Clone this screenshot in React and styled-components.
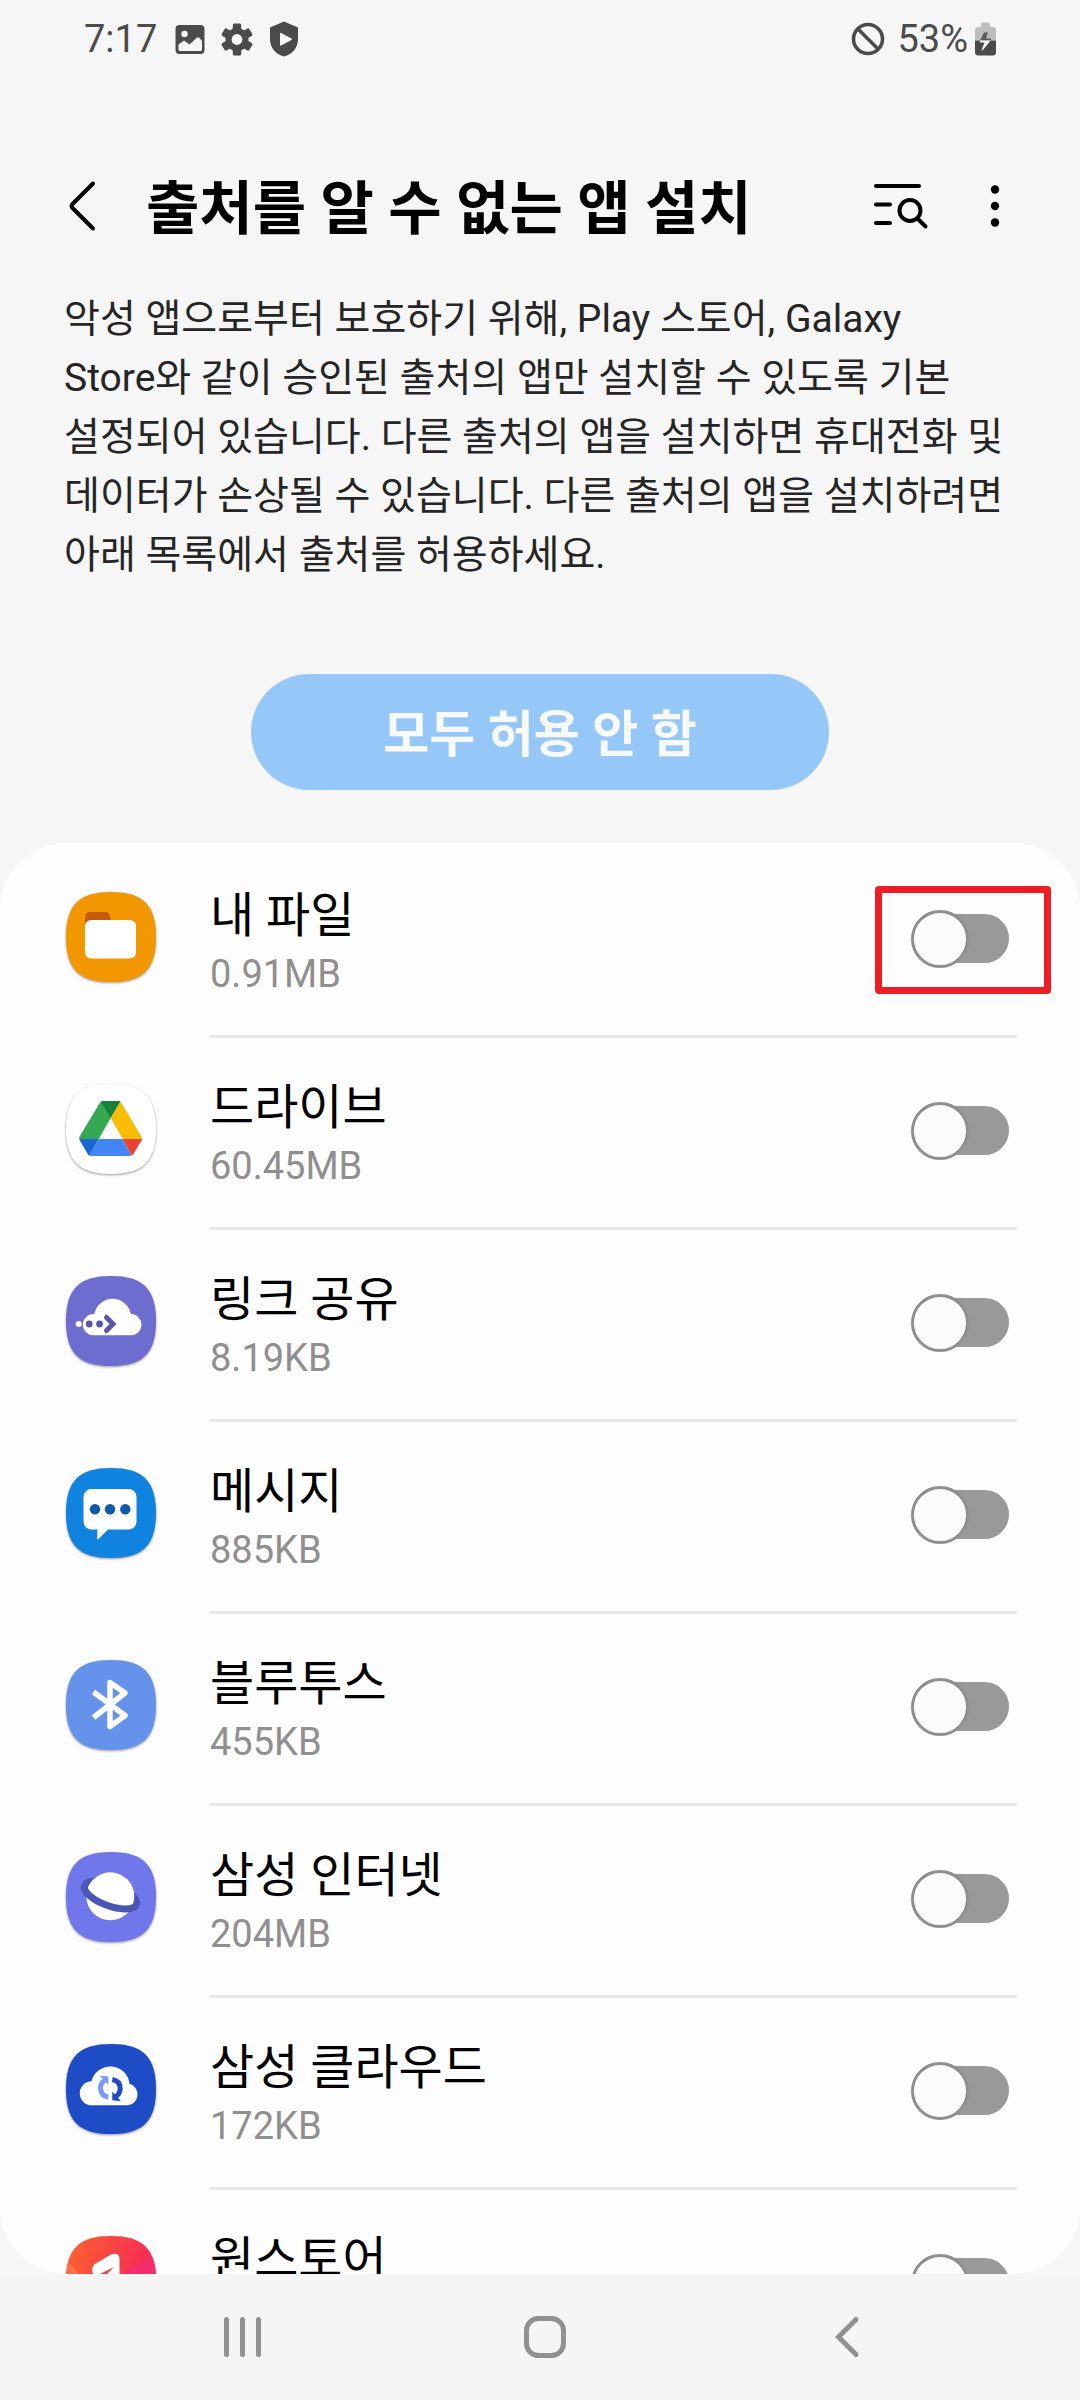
import React, { useState } from 'react';
import styled, { createGlobalStyle } from 'styled-components';

const APPS = [
  { id: 'files', name: '내 파일', size: '0.91MB', marked: true },
  { id: 'drive', name: '드라이브', size: '60.45MB' },
  { id: 'link', name: '링크 공유', size: '8.19KB' },
  { id: 'messages', name: '메시지', size: '885KB' },
  { id: 'bluetooth', name: '블루투스', size: '455KB' },
  { id: 'internet', name: '삼성 인터넷', size: '204MB' },
  { id: 'cloud', name: '삼성 클라우드', size: '172KB' },
  { id: 'onestore', name: '원스토어', size: '' },
];

const SQUIRCLE =
  'M45 0C77 0 90 13 90 45S77 90 45 90S0 77 0 45S13 0 45 0Z';

//--------------------------앱 아이콘--------------------------------

const AppArt = {
  files: (
    <>
      <path d={SQUIRCLE} fill="#f39700" />
      <path d="M19 36V25a5 5 0 0 1 5-5h16c3 0 4 3 5 9v7z" fill="#c55a08" />
      <rect x="19" y="28" width="51" height="38.5" rx="6" fill="#fff" />
    </>
  ),
  drive: (
    <>
      <path d={SQUIRCLE} fill="#fff" />
      <path
        d="M36.5 17H54L44.7 34L32.7 55H13.3V53L34 18.5Q35 17 36.5 17Z"
        fill="#34a853"
      />
      <path d="M36.5 17H52.5L54.5 17.5L44.7 34L35 17.5Z" fill="#188038" />
      <path d="M54.5 17.5L76 53.5V55H56.7L44.7 34Z" fill="#fbbc04" />
      <path d="M13.3 55H32.7L23.3 71.5L22 70.5L13.8 56.5Z" fill="#1967d2" />
      <path d="M32.7 55H56.7L65.5 71.5L63.5 72H25L23 71.5Z" fill="#4285f4" />
      <path d="M56.7 55H76L75.6 56.5L67 70.5L65.5 71.5Z" fill="#ea4335" />
    </>
  ),
  link: (
    <>
      <path d={SQUIRCLE} fill="#6d6dcf" />
      <path
        d="M27.5 59.3a10.6 10.6 0 0 1 0-21.2h.8a18.6 18.6 0 0 1 36.6 0a10.6 10.6 0 0 1 0 21.2z"
        fill="#fff"
      />
      <circle cx="12.7" cy="48" r="3" fill="#fff" />
      <circle cx="23.2" cy="48" r="3.4" fill="#5a55a8" />
      <circle cx="33.6" cy="48" r="3.4" fill="#5a55a8" />
      <path
        d="M40.5 41.5L47 48L40.5 54.5"
        stroke="#5a55a8"
        strokeWidth="5"
        strokeLinecap="round"
        fill="none"
      />
    </>
  ),
  messages: (
    <>
      <path d={SQUIRCLE} fill="#1082df" />
      <path
        d="M25.5 21h37a8 8 0 0 1 8 8v24.5a8 8 0 0 1-8 8H42L32.3 71.3Q31.3 72 31.3 70.5V61.5H25.5a8 8 0 0 1-8-8V29a8 8 0 0 1 8-8z"
        fill="#fff"
      />
      <circle cx="29" cy="41.3" r="5.2" fill="#0c5aa8" />
      <circle cx="44" cy="41.3" r="5.2" fill="#0c5aa8" />
      <circle cx="59.3" cy="41.3" r="5.2" fill="#0c5aa8" />
    </>
  ),
  bluetooth: (
    <>
      <path d={SQUIRCLE} fill="#6593ec" />
      <path
        d="M27.5 32L59 55.5L44 66.5V22.5L59 33L27.5 57.5"
        stroke="#fff"
        strokeWidth="5.5"
        strokeLinejoin="round"
        fill="none"
      />
    </>
  ),
  internet: (
    <>
      <path d={SQUIRCLE} fill="#6f77ea" />
      <ellipse
        cx="44.5"
        cy="43"
        rx="27.5"
        ry="11"
        transform="rotate(20 44.5 43)"
        stroke="#4a56b4"
        strokeWidth="7"
        fill="none"
      />
      <circle cx="44.3" cy="44.3" r="24" fill="#fff" />
      <path
        d="M17 43A27.5 11 0 0 0 72 43"
        transform="rotate(20 44.5 43)"
        stroke="#4a56b4"
        strokeWidth="7"
        fill="none"
      />
    </>
  ),
  cloud: (
    <>
      <path d={SQUIRCLE} fill="#1e4bc6" />
      <path
        d="M26 61.3a12 12 0 0 1-.5-24a19.3 19.3 0 0 1 38 2.5a11 11 0 0 1-1.5 21.5z"
        fill="#fff"
      />
      <path
        d="M42.3 53.3Q34.5 51.5 34.5 44Q34.5 39 38.5 36.5"
        stroke="#7c98f8"
        strokeWidth="5"
        fill="none"
      />
      <path d="M33.5 31.5L42.3 32.5V41z" fill="#7c98f8" />
      <path
        d="M46.3 35.5Q54.2 37 54.2 44.5Q54.2 49.5 50 52.5"
        stroke="#1e4bc6"
        strokeWidth="5"
        fill="none"
      />
      <path d="M55 57.3L46.3 56.3V47.5z" fill="#1e4bc6" />
    </>
  ),
  onestore: (
    <>
      <defs>
        <linearGradient id="oneStoreBg" x1="0" y1="0.2" x2="1" y2="0.5">
          <stop offset="0" stopColor="#fb6130" />
          <stop offset="0.8" stopColor="#f72f52" />
        </linearGradient>
        <clipPath id="oneStoreClip">
          <path d={SQUIRCLE} />
        </clipPath>
      </defs>
      <g clipPath="url(#oneStoreClip)">
        <rect width="90" height="90" fill="url(#oneStoreBg)" />
        <path d="M90 18L53 40V90H90z" fill="#f42d6c" />
        <path d="M0 24L18 42V90H0z" fill="#fb7048" />
        <path
          d="M28 28.5L45 18.5Q53.5 15.5 53.5 23V70H36V42L30 41Q23 36 28 28.5z"
          fill="#fff"
        />
        <path d="M34 38L48 31L39 40z" fill="#f5404a" />
      </g>
    </>
  ),
};

//--------------------------상태 표시줄--------------------------------

const StatusLeft = () => (
  <StStatusGroup>
    <StStatusText>7:17</StStatusText>
    <StStatusIcons>
      <svg width="30" height="36" viewBox="0 0 30 36">
        <rect x="0.5" y="4" width="29" height="29" rx="4" fill="#4b4b4b" />
        <circle cx="9.5" cy="13" r="3.2" fill="#f6f6f6" />
        <path
          d="M3.5 23.5L9 19.5L14.5 23.5L22 16.5H24L27 20V28.5Q27 30 25.5 30H5Q3.5 30 3.5 28.5z"
          fill="#f6f6f6"
        />
      </svg>
      <svg width="32" height="36" viewBox="0 0 32 36">
        <g fill="#4b4b4b">
          {[0, 60, 120].map(deg => (
            <rect
              key={deg}
              x="11.8"
              y="2.5"
              width="8.4"
              height="32"
              rx="1.5"
              transform={`rotate(${deg} 16 18.5)`}
            />
          ))}
          <circle cx="16" cy="18.5" r="11.5" />
        </g>
        <circle cx="16" cy="18.5" r="5.4" fill="#f6f6f6" />
      </svg>
      <svg width="30" height="36" viewBox="0 0 30 36">
        <path
          d="M15 0.5L29 6.5V18C29 27 23 33.5 15 35.5C7 33.5 1 27 1 18V6.5z"
          fill="#4b4b4b"
        />
        <path
          d="M11 12.5Q11 11.5 12 12L22.5 17.5Q23.5 18.2 22.5 19L12 24.5Q11 25 11 24z"
          fill="#f6f6f6"
        />
      </svg>
    </StStatusIcons>
  </StStatusGroup>
);

const StatusRight = () => (
  <StStatusGroup>
    <svg width="34" height="34" viewBox="0 0 34 34">
      <g stroke="#4b4b4b" strokeWidth="3.6" fill="none">
        <circle cx="17" cy="17" r="14.5" />
        <path d="M7 7L27 27" />
      </g>
    </svg>
    <StStatusText $gap>53%</StStatusText>
    <svg width="34" height="34" viewBox="0 0 34 34">
      <path
        d="M7 18.5V8.5Q7 5 10 5H13V2Q13 0.5 15 0.5H20Q22 0.5 22 2V5H25Q28 5 28 8.5V18.5z"
        fill="#bdbdbd"
      />
      <path
        d="M7 18.5H28V30Q28 33.5 25 33.5H10Q7 33.5 7 30z"
        fill="#4b4b4b"
      />
      <path d="M12 18.5L16 10.5H20L18 16.5H23V18.5z" fill="#5c5c5c" />
      <path
        d="M12 18.5H22.5L14.5 28.5H13.5L16.5 20.5H12z"
        fill="#fff"
      />
    </svg>
  </StStatusGroup>
);

const App = () => {
  const [allowed, setAllowed] = useState({});

  const toggleHandler = id => {
    setAllowed(prev => ({ ...prev, [id]: !prev[id] }));
  };

  const denyAllHandler = () => {
    setAllowed({});
  };

  return (
    <>
      <GlobalStyle />
      <StPage>
        <StStatusBar>
          <StatusLeft />
          <StatusRight />
        </StStatusBar>

        {/* ------------------------상단 영역--------------------------------- */}
        <StHeader>
          <StIconButton type="button" aria-label="뒤로">
            <svg width="28" height="52" viewBox="0 0 28 52">
              <path
                d="M25 3.5L4.5 24Q2.5 26 4.5 28L25 48.5"
                stroke="#000"
                strokeWidth="4"
                strokeLinecap="round"
                fill="none"
              />
            </svg>
          </StIconButton>
          <StTitle>출처를 알 수 없는 앱 설치</StTitle>
          <StHeaderActions>
            <StIconButton type="button" aria-label="검색">
              <svg width="56" height="48" viewBox="0 0 56 48">
                <g
                  stroke="#000"
                  strokeWidth="4"
                  strokeLinecap="round"
                  fill="none"
                >
                  <path d="M3 4H46M3 22.5H17M3 41H17" />
                  <circle cx="37" cy="28.5" r="10.5" />
                  <path d="M45 37L52.5 44.5" />
                </g>
              </svg>
            </StIconButton>
            <StIconButton type="button" aria-label="더보기">
              <svg width="10" height="48" viewBox="0 0 10 48">
                <circle cx="5" cy="7.5" r="4.2" />
                <circle cx="5" cy="24" r="4.2" />
                <circle cx="5" cy="40.5" r="4.2" />
              </svg>
            </StIconButton>
          </StHeaderActions>
        </StHeader>

        <StDescription>
          악성 앱으로부터 보호하기 위해, Play 스토어, Galaxy Store와 같이 승인된
          출처의 앱만 설치할 수 있도록 기본 설정되어 있습니다. 다른 출처의 앱을
          설치하면 휴대전화 및 데이터가 손상될 수 있습니다. 다른 출처의 앱을
          설치하려면 아래 목록에서 출처를 허용하세요.
        </StDescription>

        <StDenyButton type="button" onClick={denyAllHandler}>
          모두 허용 안 함
        </StDenyButton>

        {/* ------------------------앱 목록--------------------------------- */}
        <StList>
          {APPS.map(app => (
            <StRow key={app.id}>
              <StAppIcon viewBox="0 0 90 90" aria-hidden="true">
                {AppArt[app.id]}
              </StAppIcon>
              <StRowBody>
                <StLabel htmlFor={app.id}>
                  <StName>{app.name}</StName>
                  <StSize>{app.size}</StSize>
                </StLabel>
                <StSwitchBox>
                  <StSwitch
                    id={app.id}
                    type="checkbox"
                    role="switch"
                    checked={!!allowed[app.id]}
                    onChange={() => toggleHandler(app.id)}
                  />
                  {app.marked && <StMark />}
                </StSwitchBox>
              </StRowBody>
            </StRow>
          ))}
        </StList>

        {/* ------------------------하단 네비게이션--------------------------------- */}
        <StNav>
          <StNavButton type="button" aria-label="최근 앱">
            <svg width="44" height="44" viewBox="0 0 44 44">
              <path
                d="M5.5 4.5V39.5M21.5 4.5V39.5M37.5 4.5V39.5"
                stroke="#919191"
                strokeWidth="5"
                strokeLinecap="round"
              />
            </svg>
          </StNavButton>
          <StNavButton type="button" aria-label="홈">
            <svg width="44" height="44" viewBox="0 0 44 44">
              <rect
                x="3.5"
                y="3.5"
                width="37"
                height="37"
                rx="12"
                stroke="#919191"
                strokeWidth="5"
                fill="none"
              />
            </svg>
          </StNavButton>
          <StNavButton type="button" aria-label="뒤로 가기">
            <svg width="44" height="44" viewBox="0 0 44 44">
              <path
                d="M31 4.5L13.5 22L31 39.5"
                stroke="#919191"
                strokeWidth="5"
                strokeLinecap="round"
                fill="none"
              />
            </svg>
          </StNavButton>
        </StNav>
      </StPage>
    </>
  );
};

export default App;

const GlobalStyle = createGlobalStyle`
  *,
  *::before,
  *::after {
    box-sizing: border-box;
  }

  body {
    margin: 0;
    background: #f6f6f6;
    font-family: Roboto, 'Noto Sans CJK KR', sans-serif;
    color: #000;
  }

  svg {
    display: block;
    flex-shrink: 0;
  }
`;

const StPage = styled.div`
  display: flex;
  flex-direction: column;
  height: 100vh;
`;

const StStatusBar = styled.div`
  display: flex;
  justify-content: space-between;
  align-items: center;
  height: 78px;
  padding: 0 78px 0 84px;
  flex-shrink: 0;
`;

const StStatusGroup = styled.div`
  display: flex;
  align-items: center;
`;

const StStatusText = styled.span`
  margin-left: ${({ $gap }) => ($gap ? '12px' : '0')};
  font-size: 38px;
  line-height: 44px;
  color: #4b4b4b;
`;

const StStatusIcons = styled.div`
  display: flex;
  gap: 16px;
  margin-left: 18px;
`;

const StHeader = styled.header`
  display: flex;
  align-items: center;
  height: 120px;
  margin-top: 68px;
  padding: 0 80px 0 68px;
  gap: 50px;
  flex-shrink: 0;
`;

const StHeaderActions = styled.div`
  display: flex;
  align-items: center;
  gap: 61px;
`;

const StIconButton = styled.button`
  flex-shrink: 0;
  padding: 0;
  border: none;
  background: none;
  cursor: pointer;
`;

const StTitle = styled.h1`
  flex: 1;
  margin: 0;
  padding-top: 6px;
  font-size: 58px;
  line-height: 80px;
  font-weight: 700;
`;

const StDescription = styled.p`
  margin: 24px 0 0;
  padding: 0 64px;
  font-size: 39px;
  line-height: 59px;
  color: #252525;
  word-break: keep-all;
`;

const StDenyButton = styled.button`
  align-self: center;
  flex-shrink: 0;
  height: 116px;
  margin: 89px 0 53px;
  padding: 6px 132px 0;
  border: none;
  border-radius: 58px;
  background: #96c7f9;
  font-family: inherit;
  font-size: 50px;
  line-height: 60px;
  font-weight: 700;
  color: #f8f9fb;
  cursor: pointer;
`;

const StList = styled.ul`
  flex: 1;
  min-height: 0;
  margin: 0;
  padding: 3px 0 0;
  list-style: none;
  background: #fdfdfd;
  border-radius: 66px;
  overflow-y: auto;
  scrollbar-width: none;
`;

const StRow = styled.li`
  display: flex;
  align-items: flex-start;
  height: 192px;
  padding: 0 63px 0 66px;
`;

const StAppIcon = styled.svg`
  width: 90px;
  height: 90px;
  margin: 46px 54px 0 0;
  overflow: visible;
  filter: drop-shadow(0 1px 1px rgba(0, 0, 0, 0.4));
`;

const StRowBody = styled.div`
  flex: 1;
  display: flex;
  justify-content: space-between;
  height: 100%;
  padding-right: 8px;
  border-bottom: 3px solid #e8e8e8;
`;

const StLabel = styled.label`
  flex: 1;
  display: flex;
  flex-direction: column;
  padding-top: 40px;
`;

const StName = styled.span`
  font-size: 48px;
  line-height: 60px;
`;

const StSize = styled.span`
  font-size: 38px;
  line-height: 56px;
  color: #8f8f8f;
`;

const StSwitchBox = styled.div`
  position: relative;
  align-self: flex-start;
  margin-top: 64px;
`;

const StSwitch = styled.input`
  appearance: none;
  display: flex;
  align-items: center;
  width: 98px;
  height: 58px;
  margin: 0;
  cursor: pointer;
  position: relative;

  &::before {
    content: '';
    position: absolute;
    inset: 4px 0 5px 8px;
    border-radius: 25px;
    background: ${({ checked }) => (checked ? '#3e91ff' : '#999')};
  }

  &::after {
    content: '';
    position: relative;
    width: 58px;
    height: 58px;
    margin-left: ${({ checked }) => (checked ? '40px' : '0')};
    border: 3px solid #8e8e8e;
    border-radius: 50%;
    background: #fbfbfb;
  }
`;

/* 강조 표시 */
const StMark = styled.span`
  position: absolute;
  inset: -24px -42px -26px -36px;
  border: 7px solid #ee1c25;
  border-radius: 4px;
  pointer-events: none;
`;

const StNav = styled.nav`
  display: flex;
  justify-content: space-around;
  align-items: center;
  height: 126px;
  padding: 0 82px 0 92px;
  background: #f5f5f5;
  flex-shrink: 0;
`;

const StNavButton = styled.button`
  display: flex;
  justify-content: center;
  align-items: center;
  width: 120px;
  height: 100px;
  padding: 0;
  border: none;
  background: none;
  cursor: pointer;
`;
